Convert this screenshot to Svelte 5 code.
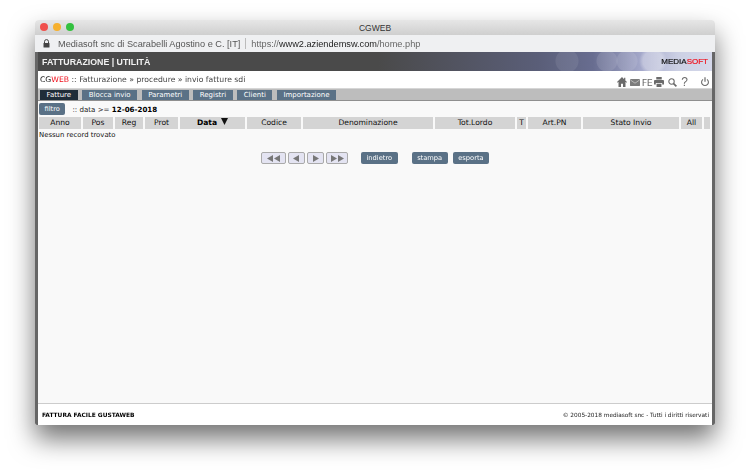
<script>
  const tabs = ["Fatture", "Blocca invio", "Parametri", "Registri", "Clienti", "Importazione"];
  const cols = ["Anno", "Pos", "Reg", "Prot", "Data", "Codice", "Denominazione", "Tot.Lordo", "T", "Art.PN", "Stato Invio", "All", ""];
</script>

<div class="page">
  <div class="window">
    <div class="titlebar">
      <div class="lights"><i class="red"></i><i class="yellow"></i><i class="green"></i></div>
      <span>CGWEB</span>
    </div>
    <div class="address">
      <svg class="lock" width="7" height="9" viewBox="0 0 7 9"><path d="M1.500 4V2.600a2 2 0 0 1 4 0V4" fill="none" stroke="#444" stroke-width="1"/><rect x="0.500" y="4" width="6" height="4.500" rx="0.600" fill="#444"/></svg>
      <span class="owner">Mediasoft snc di Scarabelli Agostino e C. [IT]</span>
      <span class="sep"></span>
      <span class="url">https://<b>www2.aziendemsw.com</b>/home.php</span>
    </div>
    <div class="frame">
      <div class="head">
        <span class="menu">FATTURAZIONE | UTILITÀ</span>
        <span class="brand">MEDIA<em>SOFT</em></span>
      </div>
      <div class="crumbs">
        <span class="path"><span class="cg">CG</span><span class="web">WEB</span> :: Fatturazione » procedure » invio fatture sdi</span>
        <div class="icons">
          <svg width="10" height="10" viewBox="0 0 12 11" preserveAspectRatio="none"><path d="M6 0 0 5.600l.7.7L1.800 5.300V11h3V7.400h2.400V11h3V5.300l1.100 1 .7-.7L10 3.800V.8H8.500v1.600z" fill="#6b6b6b"/></svg>
          <svg width="10" height="7" viewBox="0 0 11 8" preserveAspectRatio="none"><rect width="11" height="8" rx="1" fill="#7c7c7c"/><path d="M.5 1.200 5.500 4.800l5-3.600" fill="none" stroke="#ddd" stroke-width=".7"/></svg>
          <span class="fe">FE</span>
          <svg width="10" height="10" viewBox="0 0 11 10" preserveAspectRatio="none"><path d="M2.500 0h6v2.500h-6zM1 3h9a1 1 0 0 1 1 1v3.500H9V6H2v1.500H0V4a1 1 0 0 1 1-1zM2.800 6.800h5.400V10H2.800z" fill="#6b6b6b"/></svg>
          <svg class="mag" width="9" height="9" viewBox="0 0 11 11"><circle cx="4.300" cy="4.300" r="3.300" fill="none" stroke="#6b6b6b" stroke-width="1.300"/><path d="m6.800 6.800 3.500 3.500" stroke="#6b6b6b" stroke-width="2"/></svg>
          <span class="help">?</span>
          <svg width="8" height="10" viewBox="0 0 8 10"><path d="M2 2.400a3.400 3.400 0 1 0 4 0" fill="none" stroke="#6b6b6b" stroke-width="1.100"/><path d="M4 .3v4.500" stroke="#6b6b6b" stroke-width="1.200"/></svg>
        </div>
      </div>
      <nav class="tabs">
        {#each tabs as tab, i}
          <span class="tab" class:active={i === 0}>{tab}</span>
        {/each}
      </nav>
      <main>
        <div class="filter">
          <span class="btn">filtro</span>
          <span class="cond">:: data &gt;= <b>12-06-2018</b></span>
        </div>
        <div class="thead">
          {#each cols as col}
            <span class:sorted={col === "Data"}>{col}{#if col === "Data"}<svg width="7" height="7" viewBox="0 0 7 7"><path d="M0 0h7L3.500 7z" fill="#111"/></svg>{/if}</span>
          {/each}
        </div>
        <p class="empty">Nessun record trovato</p>
        <div class="pager">
          <div class="arrows">
            <span class="arrow w1"><svg width="15" height="7" viewBox="0 0 15 7"><path d="M7 0v7L1 3.500zM14 0v7L8 3.500z" fill="#777"/></svg></span>
            <span class="arrow w2"><svg width="7" height="7" viewBox="0 0 7 7"><path d="M6 0v7L0 3.500z" fill="#777"/></svg></span>
            <span class="arrow w3"><svg width="7" height="7" viewBox="0 0 7 7"><path d="M1 0v7l6-3.500z" fill="#777"/></svg></span>
            <span class="arrow w4"><svg width="15" height="7" viewBox="0 0 15 7"><path d="M1 0v7l6-3.500zM8 0v7l6-3.500z" fill="#777"/></svg></span>
          </div>
          <span class="btn back">indietro</span>
          <span class="btn print">stampa</span>
          <span class="btn">esporta</span>
        </div>
      </main>
      <footer>
        <b>FATTURA FACILE GUSTAWEB</b>
        <span>© 2005-2018 mediasoft snc - Tutti i diritti riservati</span>
      </footer>
    </div>
  </div>
</div>

<style>
  :global(body) {
    margin: 0;
    background: #fff;
  }

  .page {
    width: 750px;
    height: 475px;
    padding: 20px 35px 0 35px;
    box-sizing: border-box;
    overflow: hidden;
  }

  .window {
    height: 405px;
    display: flex;
    flex-direction: column;
    border-radius: 4px 4px 2px 2px;
    overflow: hidden;
    box-shadow: 0 14px 26px rgba(0, 0, 0, .55);
    font-family: "DejaVu Sans", sans-serif;
    color: #111;
    filter: blur(.2px);
  }

  .titlebar {
    height: 15px;
    flex: none;
    position: relative;
    display: flex;
    justify-content: center;
    align-items: center;
    background: linear-gradient(#e6e6e6, #cfcfcf);
    font: 8.500px "Liberation Sans", sans-serif;
    color: #333;
  }

  .lights {
    position: absolute;
    left: 5px;
    top: 3px;
    display: flex;
    gap: 5px;
  }

  .lights i {
    width: 8px;
    height: 8px;
    border-radius: 50%;
  }

  .red { background: #f0504c; }
  .yellow { background: #f6b02e; }
  .green { background: #33c13f; }

  .address {
    height: 17px;
    flex: none;
    display: flex;
    align-items: center;
    background: #eff0f2;
    font: 9.200px "Liberation Sans", sans-serif;
    color: #666;
    padding-left: 8px;
  }

  .owner { margin-left: 8px; color: #555; }

  .sep {
    width: 1px;
    height: 11px;
    background: #bbb;
    margin: 0 5px 0 5px;
  }

  .url b { font-weight: normal; color: #222; }

  .frame {
    flex: 1;
    min-height: 0;
    display: flex;
    flex-direction: column;
    background: #fff;
    border-left: 3px solid #666;
    border-right: 3px solid #666;
  }

  .head {
    height: 19px;
    flex: none;
    display: flex;
    justify-content: space-between;
    align-items: center;
    padding: 0 4px 0 4px;
    background:
      radial-gradient(circle at 529px 9px, rgba(255, 255, 255, .08) 0 11px, transparent 12px),
      radial-gradient(circle at 569px 9px, rgba(255, 255, 255, .1) 0 10px, transparent 11px),
      radial-gradient(circle at 589px 9px, rgba(255, 255, 255, .1) 0 10px, transparent 11px),
      radial-gradient(circle at 615px 9px, rgba(255, 255, 255, .3) 0 10px, transparent 14px),
      linear-gradient(90deg, #4a4a4a 0, #4a4a4a 340px, #5a5e78 500px, #686d90 555px, #a6aacc 605px, #ccd0e4 640px, #d5d8ea 100%);
    background-color: #4a4a4a;
  }

  .menu {
    font: bold 8.800px "Liberation Sans", sans-serif;
    color: #f2f2f2;
  }

  .brand {
    font: 8px "Liberation Sans", sans-serif;
    color: #111;
    -webkit-text-stroke: .2px currentColor;
  }

  .brand em {
    font-style: normal;
    color: #f0101c;
  }

  .crumbs {
    height: 17px;
    flex: none;
    display: flex;
    justify-content: space-between;
    align-items: center;
    padding: 0 3px 0 2px;
  }

  .path {
    font-size: 7.700px;
    color: #444;
  }

  .cg { color: #111; }
  .web { color: #f0101c; }

  .icons {
    display: flex;
    align-items: center;
    gap: 3px;
    margin-top: 5px;
  }

  .fe {
    font-size: 9.500px;
    letter-spacing: -.4px;
    color: #6b6b6b;
    margin: 0 -1px;
  }

  .mag { margin-left: 1px; }

  .help {
    font: 12px "Liberation Sans", sans-serif;
    color: #6b6b6b;
    margin: 0 10px 0 1px;
  }

  .tabs {
    height: 11px;
    flex: none;
    display: flex;
    align-items: flex-end;
    gap: 4.500px;
    padding-left: 2px;
    background: #bdbdbd;
    border-top: 1px solid #d6d6d6;
    border-bottom: 1px solid #8f8f8f;
  }

  .tab {
    height: 10px;
    line-height: 10px;
    padding: 0 6.500px;
    background: #5a7186;
    color: #fff;
    font-size: 7px;
    white-space: nowrap;
  }

  .tab.active { background: #1f2d39; }

  main {
    flex: 1;
    min-height: 0;
    background: #f9f9f9;
    padding: 0 1px;
  }

  .filter {
    height: 16px;
    display: flex;
    align-items: center;
    font-size: 7.100px;
  }

  .btn {
    height: 12px;
    line-height: 12px;
    padding: 0 5.500px;
    border-radius: 2px;
    background: #5a7186;
    color: #fff;
    font-size: 6.700px;
  }

  .cond { margin-left: 7px; color: #222; }
  .cond b { color: #000; }

  .thead {
    height: 12px;
    display: grid;
    grid-template-columns: 42px 30px 28px 33px 65px 54px 130px 80px 9px 53px 96px 21px 6px;
    column-gap: 2px;
  }

  .thead span {
    background: #d4d4d4;
    line-height: 12px;
    text-align: center;
    font-size: 7.600px;
    color: #111;
  }

  .thead .sorted {
    font-weight: bold;
    color: #000;
  }

  .thead svg { margin-left: 4px; }

  .empty {
    margin: 1px 0 0;
    font-size: 6.900px;
    line-height: 11px;
    color: #111;
  }

  .pager {
    display: flex;
    align-items: center;
    margin-top: 11px;
    padding-left: 222px;
  }

  .arrows {
    display: flex;
    gap: 2px;
    margin-right: 13px;
  }

  .arrow {
    height: 10px;
    display: flex;
    align-items: center;
    justify-content: center;
    border: 1px solid #aaa;
    border-radius: 2px;
    background: #e4e4f2;
  }

  .w1 { width: 23px; }
  .w2 { width: 15px; }
  .w3 { width: 15px; }
  .w4 { width: 20px; }

  .back { margin-right: 14px; }
  .print { margin-right: 5px; }

  footer {
    height: 21px;
    flex: none;
    display: flex;
    justify-content: space-between;
    align-items: center;
    padding: 0 3px 0 4px;
    border-top: 1px solid #ccc;
    font-size: 5.800px;
    color: #222;
  }

  footer b { color: #000; font-size: 5.900px; }
</style>
